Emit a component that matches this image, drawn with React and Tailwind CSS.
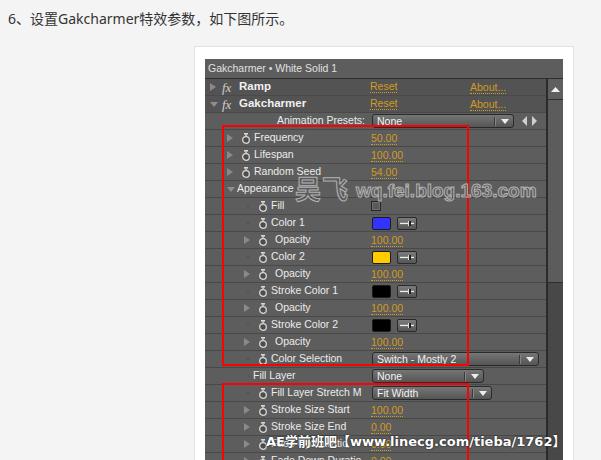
import React from 'react';

function Twirl({ open }) {
  return open ? (
    <svg width="8" height="5" viewBox="0 0 8 5"><polygon points="0,0 8,0 4,5" fill="#8e8e8e" /></svg>
  ) : (
    <svg width="6" height="8" viewBox="0 0 6 8"><polygon points="0,0 6,4 0,8" fill="#8a8a8a" /></svg>
  );
}

function Watch() {
  return (
    <svg width="10" height="11" viewBox="0 0 10 11">
      <rect x="3" y="0" width="4" height="1.6" fill="#d8d8d8" />
      <rect x="4.3" y="1.4" width="1.4" height="2.2" fill="#d8d8d8" />
      <circle cx="5" cy="7" r="3.3" fill="#4c4c4c" stroke="#d8d8d8" strokeWidth="1.3" />
    </svg>
  );
}

function Dot() {
  return <span className="ml-[3px] w-[2px] h-[2px] bg-[#525252]" />;
}

function Val({ v }) {
  return (
    <span className="ml-px text-[#d29a1f] leading-[12px] border-b border-dotted border-[#d29a1f]">{v}</span>
  );
}

function Swatch({ color }) {
  return (
    <div className="ml-[2px] flex items-center">
      <div className={`w-[19px] h-[13px] rounded-[2px] border border-[#1c1c1c] ${color}`} />
      <div className="ml-[6px] w-[20px] h-[13px] rounded-[2px] border border-[#2a2a2a] bg-gradient-to-b from-[#7c7c7c] to-[#565656] flex items-center justify-center">
        <svg width="14" height="7" viewBox="0 0 14 7">
          <rect x="0" y="2.8" width="14" height="1.3" fill="#eeeeee" />
          <rect x="8" y="1" width="3" height="5" fill="#222" />
          <rect x="8" y="1" width="1" height="5" fill="#dddddd" />
        </svg>
      </div>
    </div>
  );
}

function Drop({ text, w }) {
  return (
    <div className={`ml-[2px] ${w} h-[14px] rounded-[3px] border border-[#2a2a2a] bg-gradient-to-b from-[#767676] to-[#555555] flex items-center`}>
      <span className="flex-1 pl-[4px] text-[#f2f2f2] leading-none">{text}</span>
      <span className="w-[2px] h-[9px] border-l border-[#3a3a3a] border-r border-r-[#858585]" />
      <span className="w-[17px] flex justify-center">
        <svg width="8" height="5" viewBox="0 0 8 5"><polygon points="0,0 8,0 4,5" fill="#eeeeee" /></svg>
      </span>
    </div>
  );
}

function Row({ left, right, dark }) {
  return (
    <div className={`h-[17px] flex items-center border-b border-[#494949] ${dark ? 'bg-[#535353]' : ''}`}>
      <div className="w-[165px] shrink-0 h-full flex items-center">{left}</div>
      <div className="flex-1 h-full flex items-center">{right}</div>
    </div>
  );
}

function EffectRow({ name, open }) {
  return (
    <Row
      dark
      left={
        <div className="flex items-center pl-[5px]">
          <span className="w-[12px] flex items-center"><Twirl open={open} /></span>
          <span className="w-[17px] text-[13px] italic font-['Liberation_Serif',serif] text-[#cfcfcf] leading-none">fx</span>
          <span className="font-bold text-[11.5px] text-[#f0f0f0]">{name}</span>
        </div>
      }
      right={
        <div className="flex items-center">
          <span className="w-[100px]"><span className="text-[#d29a1f] border-b border-dotted border-[#d29a1f] leading-[12px]">Reset</span></span>
          <span className="text-[#d29a1f] border-b border-dotted border-[#d29a1f] leading-[12px]">About...</span>
        </div>
      }
    />
  );
}

function Prop1({ name, children }) {
  return (
    <Row
      left={
        <div className="flex items-center pl-[22px]">
          <span className="w-[14px] flex items-center"><Twirl /></span>
          <span className="w-[13px] flex items-center"><Watch /></span>
          <span className="text-[#ececec]">{name}</span>
        </div>
      }
      right={children}
    />
  );
}

function Prop2({ name, twirl, children }) {
  return (
    <Row
      left={
        <div className="flex items-center pl-[39px] whitespace-nowrap">
          <span className="w-[14px] flex items-center">{twirl ? <Twirl /> : <Dot />}</span>
          <span className="w-[13px] flex items-center"><Watch /></span>
          <span className={`text-[#ececec] ${name === 'Opacity' ? 'pl-[4px]' : ''}`}>{name}</span>
        </div>
      }
      right={children}
    />
  );
}

export default function App() {
  return (
    <div className="w-[601px] h-[460px] overflow-hidden bg-[#f4f4f4] relative">
      <div className="pt-[9px] pl-[8px] leading-[20px] text-[14px] text-[#333] font-['Noto_Sans','Noto_Sans_CJK_SC',sans-serif]">
        6、设置Gakcharmer特效参数，如下图所示。
      </div>

      <div className="mt-[17px] ml-[194px] w-[380px] h-[430px] bg-white border border-[#e2e2e2] pt-[12px] px-[10px]">
        <div className="relative w-[358px] bg-[#5d5d5d] text-[10.5px] font-['Liberation_Sans',Arial,sans-serif]">
          <div className="h-[19px] flex items-center pl-[3px] text-[#e0e0e0]">Gakcharmer • White Solid 1</div>
          <div className="flex border-t border-[#2e2e2e]">
            <div className="w-[341px]">
              <EffectRow name="Ramp" />
              <EffectRow name="Gakcharmer" open />
              <Row
                left={<div className="w-full flex justify-end pr-[5px] text-[#ececec]">Animation Presets:</div>}
                right={
                  <div className="flex items-center">
                    <Drop text="None" w="w-[142px]" />
                    <svg className="ml-[8px]" width="16" height="10" viewBox="0 0 16 10">
                      <polygon points="5,0 5,10 0,5" fill="#cfcfcf" />
                      <polygon points="10,0 10,10 15,5" fill="#cfcfcf" />
                    </svg>
                  </div>
                }
              />
              <Prop1 name="Frequency"><Val v="50.00" /></Prop1>
              <Prop1 name="Lifespan"><Val v="100.00" /></Prop1>
              <Prop1 name="Random Seed"><Val v="54.00" /></Prop1>
              <Row
                left={
                  <div className="flex items-center pl-[22px]">
                    <span className="w-[10px] flex items-center"><Twirl open /></span>
                    <span className="text-[#ececec]">Appearance</span>
                  </div>
                }
              />
              <Prop2 name="Fill">
                <div className="ml-px w-[10px] h-[10px] border border-[#262626] bg-[#5a5a5a] shadow-[inset_0_0_0_1px_#6e6e6e]" />
              </Prop2>
              <Prop2 name="Color 1"><Swatch color="bg-[#3333ff]" /></Prop2>
              <Prop2 name="Opacity" twirl><Val v="100.00" /></Prop2>
              <Prop2 name="Color 2"><Swatch color="bg-[#ffcc00]" /></Prop2>
              <Prop2 name="Opacity" twirl><Val v="100.00" /></Prop2>
              <Prop2 name="Stroke Color 1"><Swatch color="bg-[#000000]" /></Prop2>
              <Prop2 name="Opacity" twirl><Val v="100.00" /></Prop2>
              <Prop2 name="Stroke Color 2"><Swatch color="bg-[#000000]" /></Prop2>
              <Prop2 name="Opacity" twirl><Val v="100.00" /></Prop2>
              <Prop2 name="Color Selection"><Drop text="Switch - Mostly 2" w="w-[167px]" /></Prop2>
              <Row
                left={
                  <div className="flex items-center pl-[42px]">
                    <span className="w-[6px] flex items-center"><span className="w-[2px] h-[2px] bg-[#525252]" /></span>
                    <span className="text-[#ececec]">Fill Layer</span>
                  </div>
                }
                right={<Drop text="None" w="w-[112px]" />}
              />
              <Prop2 name="Fill Layer Stretch M"><Drop text="Fit Width" w="w-[120px]" /></Prop2>
              <Prop2 name="Stroke Size Start" twirl><Val v="100.00" /></Prop2>
              <Prop2 name="Stroke Size End" twirl><Val v="0.00" /></Prop2>
              <Prop2 name="Fade Up Duratio" twirl><Val v="0.00" /></Prop2>
              <Prop2 name="Fade Down Duratio" twirl><Val v="0.00" /></Prop2>
            </div>
            <div className="w-[17px] border-l-2 border-[#2b2b2b] flex flex-col">
              <div className="h-[21px] bg-[#5f5f5f] border-b border-[#2f2f2f] flex items-center justify-center">
                <svg width="9" height="5" viewBox="0 0 9 5"><polygon points="0,5 9,5 4.5,0" fill="#f2f2f2" /></svg>
              </div>
              <div className="h-[183px] bg-[#5c5c5c] border-b border-[#2f2f2f]" />
              <div className="flex-1 bg-[#484848]" />
            </div>
          </div>

          <div className="absolute left-[17px] top-[66px] w-[247px] h-[241px] border-2 border-[#ff0000]" />
          <div className="absolute left-[17px] top-[324px] w-[247px] h-[150px] border-2 border-[#ff0000]" />
        </div>
      </div>

      <div className="absolute left-[295px] top-[175px] flex items-end whitespace-nowrap text-transparent [-webkit-text-stroke:1px_#b2b2b2] font-bold">
        <span className="text-[26px] leading-none tracking-[1px] font-['Noto_Sans_CJK_SC',sans-serif]">吴飞</span>
        <span className="ml-[7px] mb-[1px] text-[19px] leading-none font-['Liberation_Sans',Arial,sans-serif]">wq.fei.blog.163.com</span>
      </div>

      <div className="absolute left-[266px] top-[435px] whitespace-nowrap text-white font-bold text-[13px] leading-none font-['DejaVu_Sans','Noto_Sans_CJK_SC',sans-serif] [text-shadow:0_0_2px_#222,0_0_1px_#222]">
        AE学前班吧【www.linecg.com/tieba/1762】
      </div>
    </div>
  );
}
